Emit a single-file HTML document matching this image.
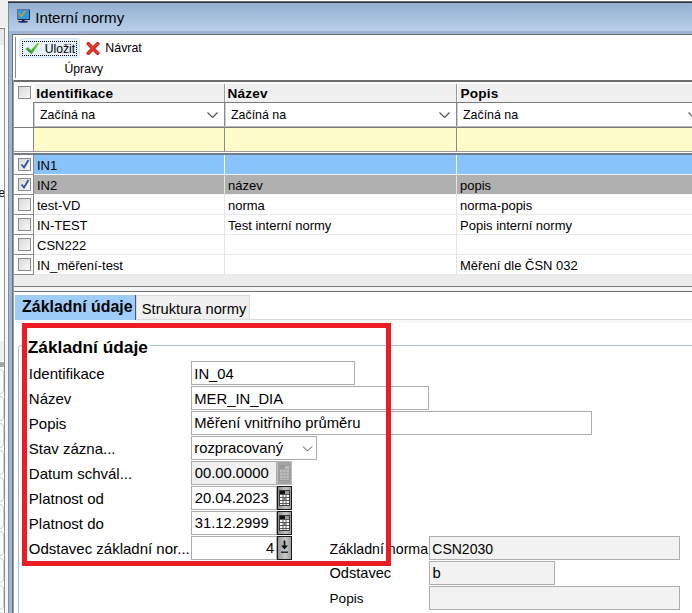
<!DOCTYPE html>
<html><head><meta charset="utf-8"><style>
html,body{margin:0;padding:0;}
body{width:692px;height:613px;position:relative;overflow:hidden;background:#fff;font-family:"Liberation Sans",sans-serif;}
body>div,body>svg{position:absolute;}
.t{white-space:nowrap;line-height:1;}
</style></head><body>
<div style="left:0px;top:0px;width:8px;height:27px;background:#f0f0f0"></div>
<div style="left:0px;top:28px;width:4px;height:1px;background:#7c8190"></div>
<div style="left:0px;top:29px;width:4px;height:16px;background:#ebebeb"></div>
<div style="left:4px;top:28px;width:1px;height:585px;background:#8a8f9a"></div>
<div style="left:5px;top:0px;width:3px;height:613px;background:#f7f7f7"></div>
<div style="left:5px;top:0px;width:3px;height:27px;background:#f0f0f0"></div>
<div style="left:0;top:187px;width:4px;height:14px;overflow:hidden"><div class="t" style="position:absolute;left:-6px;top:0px;font-size:12.5px;color:#000">re</div></div>
<div style="left:0px;top:341px;width:4px;height:20px;background:#efefef"></div>
<div style="left:0px;top:362px;width:4px;height:5px;background:#a8a8a8"></div>
<div style="left:-6px;top:369px;width:8px;height:23px;border:1px solid #cdcdcd;border-radius:4px;background:#fff"></div>
<div style="left:-6px;top:396px;width:8px;height:23px;border:1px solid #cdcdcd;border-radius:4px;background:#fff"></div>
<div style="left:-6px;top:423px;width:8px;height:23px;border:1px solid #cdcdcd;border-radius:4px;background:#fff"></div>
<div style="left:-6px;top:450px;width:8px;height:23px;border:1px solid #cdcdcd;border-radius:4px;background:#fff"></div>
<div style="left:-6px;top:477px;width:8px;height:23px;border:1px solid #cdcdcd;border-radius:4px;background:#fff"></div>
<div style="left:-6px;top:504px;width:8px;height:23px;border:1px solid #cdcdcd;border-radius:4px;background:#fff"></div>
<div style="left:-6px;top:531px;width:8px;height:23px;border:1px solid #cdcdcd;border-radius:4px;background:#fff"></div>
<div style="left:-6px;top:558px;width:8px;height:23px;border:1px solid #cdcdcd;border-radius:4px;background:#fff"></div>
<div style="left:-6px;top:585px;width:8px;height:23px;border:1px solid #cdcdcd;border-radius:4px;background:#fff"></div>
<div style="left:-6px;top:612px;width:8px;height:23px;border:1px solid #cdcdcd;border-radius:4px;background:#fff"></div>
<div style="left:8px;top:1px;width:684px;height:1px;background:#6a6a6a"></div>
<div style="left:8px;top:2px;width:684px;height:1px;background:#363636"></div>
<div style="left:8px;top:3px;width:1px;height:610px;background:#838b94"></div>
<div style="left:9px;top:3px;width:683px;height:28px;background:linear-gradient(#93afd1,#b8cfe9)"></div>
<div style="left:9px;top:31px;width:683px;height:3px;background:#9db4d2"></div>
<div style="left:9px;top:31px;width:3px;height:582px;background:#9ab6da"></div>
<div style="left:12px;top:34px;width:680px;height:1px;background:#6d6d6d"></div>
<div style="left:12px;top:34px;width:1px;height:579px;background:#6d6d6d"></div>
<div style="left:13px;top:35px;width:679px;height:578px;background:#fff"></div>
<svg style="left:16px;top:8px" width="15" height="16" viewBox="0 0 15 16">
<rect x="1.5" y="1.5" width="12" height="10" fill="#2e9ad8" stroke="#6a6a9a" stroke-width="1"/>
<path d="M13.5 2 V11.5 H2" stroke="#2a2a50" stroke-width="1" fill="none"/>
<path d="M3.3 5.6 L5.4 8.5 L9 3.1" stroke="#f39a1a" stroke-width="1.2" fill="none" stroke-linecap="round"/>
<rect x="6" y="12" width="2.5" height="1.5" fill="#101030"/>
<ellipse cx="7" cy="13.8" rx="5" ry="1" fill="#2a2a60"/>
</svg>
<div class="t" style="left:35.3px;top:10.32px;font-size:15.1px;font-weight:400;color:#000;">Interní normy</div>
<div style="left:15px;top:37px;width:1px;height:41px;background:#8a8a8a"></div>
<div style="left:19px;top:38px;width:59px;height:18px;background:#e5f1fb;border:1px solid #cfe6f8;border-radius:3px"></div>
<div style="left:22px;top:41px;width:55px;height:15px;border:1px dotted #000;box-sizing:border-box"></div>
<svg style="left:25px;top:42px" width="15" height="13" viewBox="0 0 15 13">
<defs><linearGradient id="gck" x1="0" y1="1" x2="1" y2="0"><stop offset="0" stop-color="#2a8a22"/><stop offset="0.5" stop-color="#4cb030"/><stop offset="1" stop-color="#9ade50"/></linearGradient></defs>
<path d="M0.5 7 L3 5.3 L6 8.2 L12.6 0.6 L14.2 1.8 L6.5 12.3 Z" fill="url(#gck)"/>
</svg>
<div class="t" style="left:44.7px;top:42.57px;font-size:12.2px;font-weight:400;color:#000;">Uložit</div>
<svg style="left:86px;top:42px" width="14" height="13" viewBox="0 0 14 13">
<path d="M2.3 1.8 L11.7 11.2 M11.7 1.8 L2.3 11.2" stroke="#b81810" stroke-width="3.6" stroke-linecap="round"/>
<path d="M2.3 1.8 L11.7 11.2 M11.7 1.8 L2.3 11.2" stroke="#e83a26" stroke-width="2.2" stroke-linecap="round"/>
</svg>
<div class="t" style="left:105.3px;top:42.30px;font-size:12.4px;font-weight:400;color:#000;">Návrat</div>
<div class="t" style="left:64.5px;top:63.17px;font-size:12.2px;font-weight:400;color:#000;">Úpravy</div>
<div style="left:13px;top:80px;width:679px;height:2px;background:#6d6d6d"></div>
<div style="left:13px;top:82px;width:679px;height:21px;background:#fff"></div>
<div style="left:35px;top:84px;width:657px;height:18px;background:#f0f0f0"></div>
<div style="left:18px;top:86px;width:11px;height:11px;border:1px solid #8a8a8a;background:linear-gradient(135deg,#d8d8dc,#f8f8f8)"></div>
<div class="t" style="left:36.2px;top:86.69px;font-size:13.6px;font-weight:700;color:#000;letter-spacing:0.2px">Identifikace</div>
<div style="left:224px;top:84px;width:1px;height:18px;background:#9a9a9a"></div>
<div style="left:225px;top:84px;width:1px;height:18px;background:#fff"></div>
<div class="t" style="left:227.5px;top:86.69px;font-size:13.6px;font-weight:700;color:#000;letter-spacing:0.2px">Název</div>
<div style="left:456px;top:84px;width:1px;height:18px;background:#9a9a9a"></div>
<div style="left:457px;top:84px;width:1px;height:18px;background:#fff"></div>
<div class="t" style="left:460.5px;top:86.69px;font-size:13.6px;font-weight:700;color:#000;letter-spacing:0.2px">Popis</div>
<div style="left:33px;top:102px;width:659px;height:1px;background:#7a7a7a"></div>
<div style="left:34px;top:103px;width:658px;height:1px;background:#b4b4b4"></div>
<div style="left:33px;top:103px;width:1px;height:49px;background:#8a8a8a"></div>
<div style="left:34px;top:103px;width:190px;height:23px;background:#fff"></div>
<div style="left:225px;top:103px;width:231px;height:23px;background:#fff"></div>
<div style="left:457px;top:103px;width:235px;height:23px;background:#fff"></div>
<div style="left:34px;top:103px;width:1px;height:24px;background:#d0d0d0"></div>
<div style="left:225px;top:103px;width:1px;height:24px;background:#d0d0d0"></div>
<div style="left:457px;top:103px;width:1px;height:24px;background:#d0d0d0"></div>
<div style="left:224px;top:103px;width:1px;height:48px;background:#8a8a8a"></div>
<div style="left:456px;top:103px;width:1px;height:48px;background:#8a8a8a"></div>
<div class="t" style="left:40px;top:109.20px;font-size:12.4px;font-weight:400;color:#000;">Začíná na</div>
<div class="t" style="left:231px;top:109.20px;font-size:12.4px;font-weight:400;color:#000;">Začíná na</div>
<div class="t" style="left:463px;top:109.20px;font-size:12.4px;font-weight:400;color:#000;">Začíná na</div>
<svg style="left:207px;top:112px" width="11" height="7" viewBox="0 0 11 7"><path d="M0.5 0.5 L5.5 5.5 L10.5 0.5" stroke="#505050" stroke-width="1.15" fill="none"/></svg>
<svg style="left:439px;top:112px" width="11" height="7" viewBox="0 0 11 7"><path d="M0.5 0.5 L5.5 5.5 L10.5 0.5" stroke="#505050" stroke-width="1.15" fill="none"/></svg>
<svg style="left:688px;top:112px" width="11" height="7" viewBox="0 0 11 7"><path d="M0.5 0.5 L5.5 5.5 L10.5 0.5" stroke="#505050" stroke-width="1.15" fill="none"/></svg>
<div style="left:34px;top:126px;width:658px;height:1px;background:#b8b8b8"></div>
<div style="left:13px;top:127px;width:679px;height:1px;background:#7a7a7a"></div>
<div style="left:34px;top:128px;width:190px;height:23px;background:#fffccc"></div>
<div style="left:225px;top:128px;width:231px;height:23px;background:#fffccc"></div>
<div style="left:457px;top:128px;width:235px;height:23px;background:#fffccc"></div>
<div style="left:13px;top:151px;width:679px;height:1px;background:#9a9a9a"></div>
<div style="left:13px;top:153px;width:679px;height:2px;background:#777b87"></div>
<div style="left:34px;top:155px;width:658px;height:19px;background:#89c3fb"></div>
<div style="left:13px;top:174px;width:21px;height:1px;background:#8a8a8a"></div>
<div style="left:34px;top:174px;width:658px;height:1px;background:#f4f4f4"></div>
<div style="left:18px;top:158px;width:11px;height:11px;border:1px solid #8a8a8a;background:linear-gradient(135deg,#d8d8dc,#f8f8f8)"></div>
<svg style="left:20px;top:159px" width="10" height="10" viewBox="0 0 10 10"><path d="M1.5 5.5 L4 8.5 L8.5 1" stroke="#3050a0" stroke-width="1.8" fill="none"/></svg>
<div class="t" style="left:37px;top:158.50px;font-size:13.0px;font-weight:400;color:#000;">IN1</div>
<div class="t" style="left:228px;top:158.50px;font-size:13.0px;font-weight:400;color:#000;"></div>
<div class="t" style="left:460px;top:158.50px;font-size:13.0px;font-weight:400;color:#000;"></div>
<div style="left:34px;top:175px;width:658px;height:19px;background:#b0b0b0"></div>
<div style="left:13px;top:194px;width:21px;height:1px;background:#8a8a8a"></div>
<div style="left:34px;top:194px;width:658px;height:1px;background:#f4f4f4"></div>
<div style="left:18px;top:178px;width:11px;height:11px;border:1px solid #8a8a8a;background:linear-gradient(135deg,#d8d8dc,#f8f8f8)"></div>
<svg style="left:20px;top:179px" width="10" height="10" viewBox="0 0 10 10"><path d="M1.5 5.5 L4 8.5 L8.5 1" stroke="#3050a0" stroke-width="1.8" fill="none"/></svg>
<div class="t" style="left:37px;top:178.50px;font-size:13.0px;font-weight:400;color:#000;">IN2</div>
<div class="t" style="left:228px;top:178.50px;font-size:13.0px;font-weight:400;color:#000;">název</div>
<div class="t" style="left:460px;top:178.50px;font-size:13.0px;font-weight:400;color:#000;">popis</div>
<div style="left:13px;top:214px;width:21px;height:1px;background:#8a8a8a"></div>
<div style="left:34px;top:214px;width:658px;height:1px;background:#e9e9e9"></div>
<div style="left:18px;top:198px;width:11px;height:11px;border:1px solid #8a8a8a;background:linear-gradient(135deg,#d8d8dc,#f8f8f8)"></div>
<div class="t" style="left:37px;top:198.50px;font-size:13.0px;font-weight:400;color:#000;">test-VD</div>
<div class="t" style="left:228px;top:198.50px;font-size:13.0px;font-weight:400;color:#000;">norma</div>
<div class="t" style="left:460px;top:198.50px;font-size:13.0px;font-weight:400;color:#000;">norma-popis</div>
<div style="left:13px;top:234px;width:21px;height:1px;background:#8a8a8a"></div>
<div style="left:34px;top:234px;width:658px;height:1px;background:#e9e9e9"></div>
<div style="left:18px;top:218px;width:11px;height:11px;border:1px solid #8a8a8a;background:linear-gradient(135deg,#d8d8dc,#f8f8f8)"></div>
<div class="t" style="left:37px;top:218.50px;font-size:13.0px;font-weight:400;color:#000;">IN-TEST</div>
<div class="t" style="left:228px;top:218.50px;font-size:13.0px;font-weight:400;color:#000;">Test interní normy</div>
<div class="t" style="left:460px;top:218.50px;font-size:13.0px;font-weight:400;color:#000;">Popis interní normy</div>
<div style="left:13px;top:254px;width:21px;height:1px;background:#8a8a8a"></div>
<div style="left:34px;top:254px;width:658px;height:1px;background:#e9e9e9"></div>
<div style="left:18px;top:238px;width:11px;height:11px;border:1px solid #8a8a8a;background:linear-gradient(135deg,#d8d8dc,#f8f8f8)"></div>
<div class="t" style="left:37px;top:238.50px;font-size:13.0px;font-weight:400;color:#000;">CSN222</div>
<div class="t" style="left:228px;top:238.50px;font-size:13.0px;font-weight:400;color:#000;"></div>
<div class="t" style="left:460px;top:238.50px;font-size:13.0px;font-weight:400;color:#000;"></div>
<div style="left:13px;top:274px;width:21px;height:1px;background:#8a8a8a"></div>
<div style="left:34px;top:274px;width:658px;height:1px;background:#e9e9e9"></div>
<div style="left:18px;top:258px;width:11px;height:11px;border:1px solid #8a8a8a;background:linear-gradient(135deg,#d8d8dc,#f8f8f8)"></div>
<div class="t" style="left:37px;top:258.50px;font-size:13.0px;font-weight:400;color:#000;">IN_měření-test</div>
<div class="t" style="left:228px;top:258.50px;font-size:13.0px;font-weight:400;color:#000;"></div>
<div class="t" style="left:460px;top:258.50px;font-size:13.0px;font-weight:400;color:#000;">Měření dle ČSN 032</div>
<div style="left:33px;top:155px;width:1px;height:120px;background:#8a8a8a"></div>
<div style="left:224px;top:155px;width:1px;height:120px;background:#e4e4e4"></div>
<div style="left:456px;top:155px;width:1px;height:120px;background:#e4e4e4"></div>
<div style="left:224px;top:155px;width:1px;height:19px;background:#fff"></div>
<div style="left:456px;top:155px;width:1px;height:19px;background:#fff"></div>
<div style="left:13px;top:275px;width:679px;height:11px;background:#ececec"></div>
<div style="left:12px;top:286px;width:680px;height:1px;background:#7a7a7a"></div>
<div style="left:12px;top:287px;width:680px;height:4px;background:#f5f5f5"></div>
<div style="left:12px;top:291px;width:680px;height:1px;background:#6e6e6e"></div>
<div style="left:12px;top:292px;width:1px;height:321px;background:#6d6d6d"></div>
<div style="left:15px;top:295px;width:121px;height:25px;background:#9fcdfa"></div>
<div style="left:135px;top:295px;width:1px;height:25px;background:#505a66"></div>
<div style="left:136px;top:295px;width:114px;height:24px;background:#f0f0f0;border:1px solid #d9d9d9;border-bottom:none;box-sizing:border-box"></div>
<div class="t" style="left:22.1px;top:298.74px;font-size:15.9px;font-weight:700;color:#000;">Základní údaje</div>
<div class="t" style="left:141.8px;top:301.56px;font-size:14.7px;font-weight:400;color:#000;">Struktura normy</div>
<div style="left:136px;top:319px;width:556px;height:1px;background:#dadada"></div>
<div style="left:136px;top:320px;width:556px;height:3px;background:#f7f7f7"></div>
<div style="left:18px;top:345px;width:700px;height:300px;border:1px solid #a9c0db;border-radius:3px;box-sizing:border-box"></div>
<div style="left:26px;top:336px;width:124px;height:18px;background:#fff"></div>
<div class="t" style="left:27.8px;top:338.56px;font-size:17.3px;font-weight:700;color:#000;">Základní údaje</div>
<div class="t" style="left:28.8px;top:366.30px;font-size:15px;font-weight:400;color:#000;">Identifikace</div>
<div class="t" style="left:28.8px;top:390.90px;font-size:15px;font-weight:400;color:#000;">Název</div>
<div class="t" style="left:28.8px;top:415.60px;font-size:15px;font-weight:400;color:#000;">Popis</div>
<div class="t" style="left:28.8px;top:440.90px;font-size:15px;font-weight:400;color:#000;">Stav zázna...</div>
<div class="t" style="left:28.8px;top:466.10px;font-size:15px;font-weight:400;color:#000;">Datum schvál...</div>
<div class="t" style="left:28.8px;top:491.10px;font-size:15px;font-weight:400;color:#000;">Platnost od</div>
<div class="t" style="left:28.8px;top:515.90px;font-size:15px;font-weight:400;color:#000;">Platnost do</div>
<div class="t" style="left:28.8px;top:540.80px;font-size:15px;font-weight:400;color:#000;">Odstavec základní nor...</div>
<div style="left:191px;top:361px;width:164px;height:24px;background:#fff;border:1px solid #acacac;box-sizing:border-box"></div>
<div class="t" style="left:194.3px;top:366.77px;font-size:14.8px;font-weight:400;color:#000;">IN_04</div>
<div style="left:191px;top:386px;width:238px;height:24px;background:#fff;border:1px solid #acacac;box-sizing:border-box"></div>
<div class="t" style="left:194.3px;top:391.77px;font-size:14.8px;font-weight:400;color:#000;">MER_IN_DIA</div>
<div style="left:191px;top:411px;width:401px;height:24px;background:#fff;border:1px solid #acacac;box-sizing:border-box"></div>
<div class="t" style="left:194.3px;top:416.47px;font-size:14.8px;font-weight:400;color:#000;">Měření vnitřního průměru</div>
<div style="left:191px;top:436px;width:126px;height:24px;background:#fff;border:1px solid #acacac;box-sizing:border-box"></div>
<div class="t" style="left:194.3px;top:441.47px;font-size:14.8px;font-weight:400;color:#000;">rozpracovaný</div>
<svg style="left:302px;top:446px" width="11" height="6" viewBox="0 0 11 6"><path d="M1 0.5 L5.5 5 L10 0.5" stroke="#4a4a4a" stroke-width="1" fill="none"/></svg>
<div style="left:191px;top:461px;width:86px;height:24px;background:#f0f0f0;border:1px solid #acacac;box-sizing:border-box"></div>
<div class="t" style="left:194.7px;top:466.07px;font-size:14.8px;font-weight:400;color:#000;">00.00.0000</div>
<div style="left:277px;top:461px;width:15px;height:24px;background:#a4a4a4;border:1px solid #bcbcbc;box-sizing:border-box"></div>
<svg style="left:279px;top:465px" width="11" height="16" viewBox="0 0 11 16"><rect x="0.5" y="0.5" width="10" height="15" fill="#bdbdbd" stroke="#9a9a9a" stroke-width="1"/><rect x="1" y="1" width="5" height="3" fill="#9a9a9a"/><g stroke="#a8a8a8" stroke-width="1"><path d="M1 4.5H10M1 7.5H10M1 10.5H10M1 13.5H10M4 4V15M7 4V15"/></g></svg>
<div style="left:191px;top:486px;width:86px;height:24px;background:#fff;border:1px solid #acacac;box-sizing:border-box"></div>
<div class="t" style="left:194.7px;top:491.07px;font-size:14.8px;font-weight:400;color:#000;">20.04.2023</div>
<div style="left:277px;top:486px;width:15px;height:24px;background:linear-gradient(90deg,#8a8a8a,#c4c4c4 60%,#9a9a9a);border:1px solid #1a1a1a;box-sizing:border-box"></div>
<svg style="left:279px;top:490px" width="11" height="16" viewBox="0 0 11 16"><rect x="0.5" y="0.5" width="10" height="15" fill="#fff" stroke="#3a3a3a" stroke-width="1"/><rect x="1" y="1" width="5" height="3" fill="#111"/><rect x="6" y="1" width="4" height="3" fill="#9a9a9a"/><g stroke="#5a5a5a" stroke-width="1"><path d="M1 4.5H10M1 7.5H10M1 10.5H10M1 13.5H10M4 4V15M7 4V15"/></g><rect x="4.5" y="8" width="2" height="2" fill="#777"/></svg>
<div style="left:191px;top:511px;width:86px;height:24px;background:#fff;border:1px solid #acacac;box-sizing:border-box"></div>
<div class="t" style="left:194.7px;top:516.07px;font-size:14.8px;font-weight:400;color:#000;">31.12.2999</div>
<div style="left:277px;top:511px;width:15px;height:24px;background:linear-gradient(90deg,#8a8a8a,#c4c4c4 60%,#9a9a9a);border:1px solid #1a1a1a;box-sizing:border-box"></div>
<svg style="left:279px;top:515px" width="11" height="16" viewBox="0 0 11 16"><rect x="0.5" y="0.5" width="10" height="15" fill="#fff" stroke="#3a3a3a" stroke-width="1"/><rect x="1" y="1" width="5" height="3" fill="#111"/><rect x="6" y="1" width="4" height="3" fill="#9a9a9a"/><g stroke="#5a5a5a" stroke-width="1"><path d="M1 4.5H10M1 7.5H10M1 10.5H10M1 13.5H10M4 4V15M7 4V15"/></g><rect x="4.5" y="8" width="2" height="2" fill="#777"/></svg>
<div style="left:191px;top:536px;width:86px;height:24px;background:#fff;border:1px solid #acacac;box-sizing:border-box"></div>
<div class="t" style="left:266px;top:540.97px;font-size:14.8px;font-weight:400;color:#000;">4</div>
<div style="left:277px;top:536px;width:15px;height:24px;background:linear-gradient(90deg,#9a9a9a,#c8c8c8 55%,#a0a0a0);border:1px solid #1a1a1a;box-sizing:border-box"></div>
<svg style="left:279px;top:539px" width="11" height="16" viewBox="0 0 11 16"><path d="M5.5 1.5V8" stroke="#111" stroke-width="1.8"/><path d="M2 6.5L5.5 10.5L9 6.5Z" fill="#111"/><path d="M2 13.2H9" stroke="#111" stroke-width="1.3"/></svg>
<div class="t" style="left:329.5px;top:542.18px;font-size:14.2px;font-weight:400;color:#000;">Základní norma</div>
<div style="left:429px;top:536px;width:251px;height:24px;background:#f2f2f2;border:1px solid #adadad;box-sizing:border-box"></div>
<div class="t" style="left:432.3px;top:542.15px;font-size:14.0px;font-weight:400;color:#000;">CSN2030</div>
<div class="t" style="left:329.5px;top:566.44px;font-size:14.6px;font-weight:400;color:#000;">Odstavec</div>
<div style="left:429px;top:561px;width:126px;height:24px;background:#f2f2f2;border:1px solid #adadad;box-sizing:border-box"></div>
<div class="t" style="left:432.5px;top:566.27px;font-size:14.8px;font-weight:400;color:#000;">b</div>
<div class="t" style="left:329.5px;top:591.79px;font-size:13.6px;font-weight:400;color:#000;">Popis</div>
<div style="left:429px;top:586px;width:251px;height:24px;background:#f2f2f2;border:1px solid #adadad;box-sizing:border-box"></div>
<div style="left:12px;top:34px;width:1px;height:579px;background:#6d6d6d"></div>
<div style="left:13px;top:80px;width:1px;height:533px;background:#a0a0a0"></div>
<div style="left:22px;top:323px;width:369px;height:243px;border:5px solid #ed1c24;box-sizing:border-box"></div>
</body></html>
